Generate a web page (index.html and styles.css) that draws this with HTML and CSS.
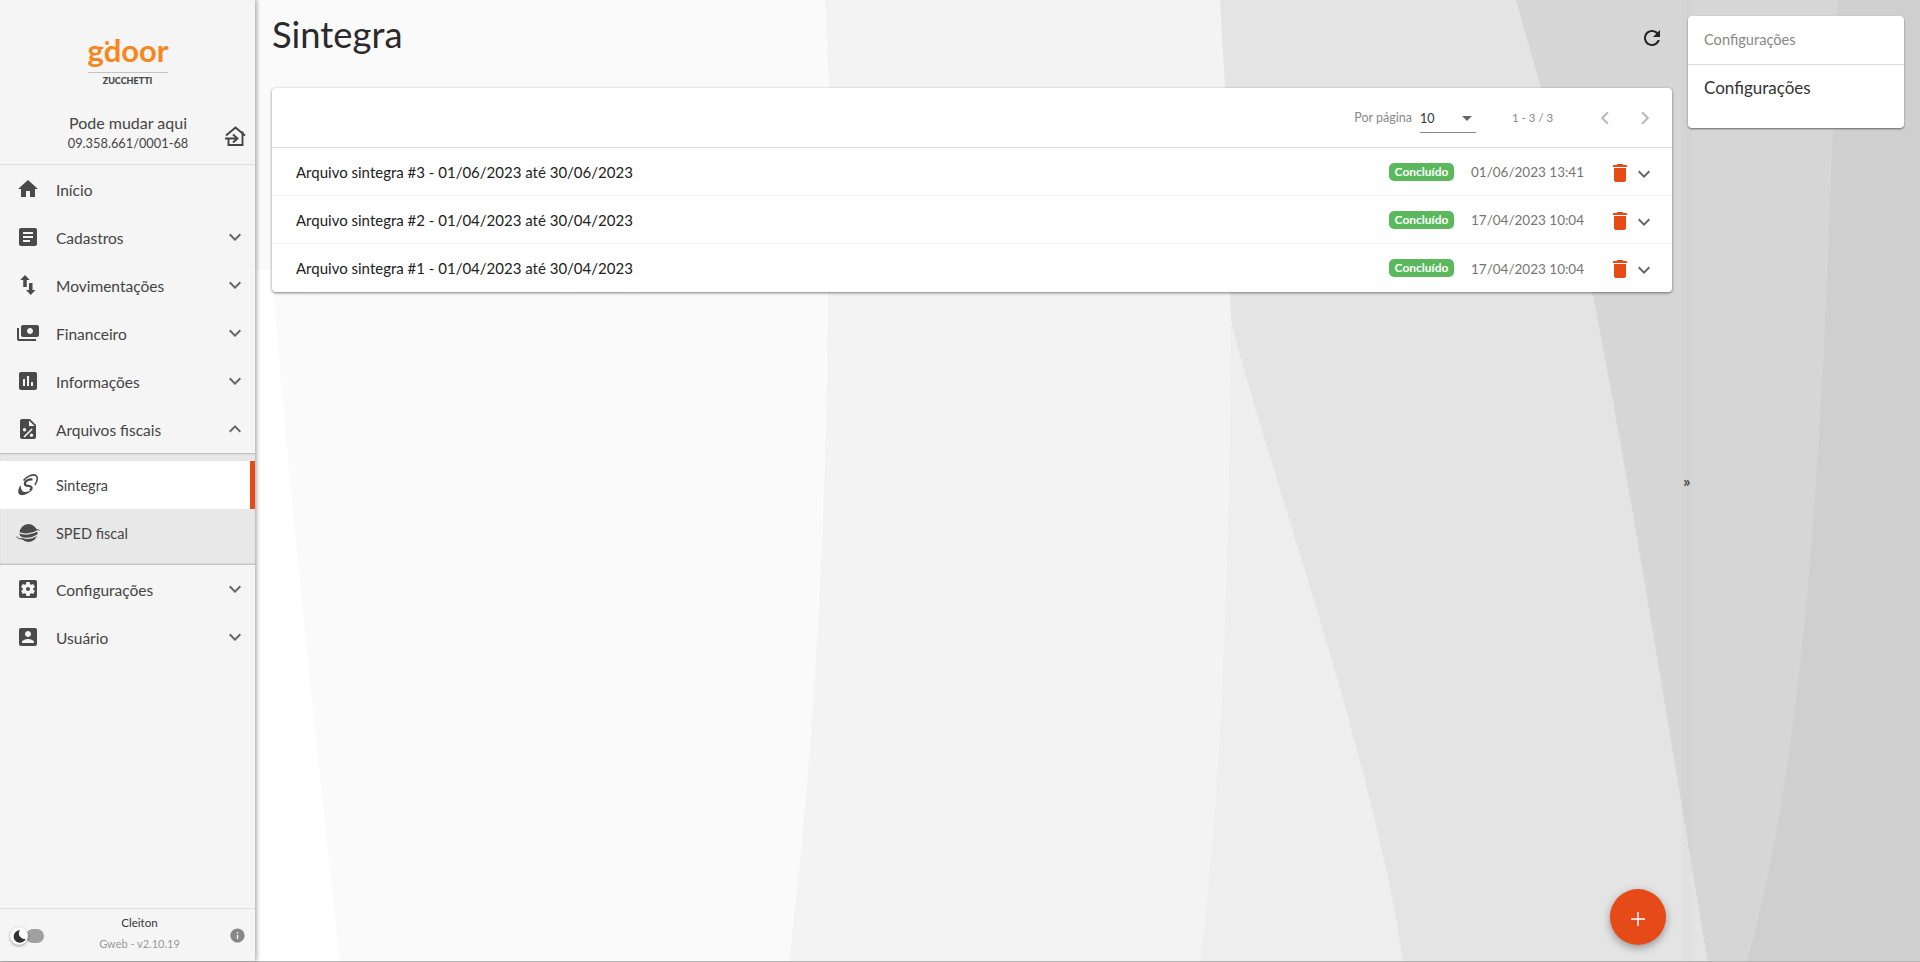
FILE: index.html
```html
<!DOCTYPE html>
<html lang="pt-BR">
<head>
  <meta charset="utf-8">
  <title>Sintegra</title>
  <link rel="stylesheet" href="styles.css">
</head>
<body>
  <svg class="sprite" width="0" height="0">
    <symbol id="i-home" viewBox="0 0 24 24"><path d="M10 20v-6h4v6h5v-8h3L12 3 2 12h3v8z"/></symbol>
    <symbol id="i-article" viewBox="0 0 24 24"><path d="M19 3H5c-1.1 0-2 .9-2 2v14c0 1.1.9 2 2 2h14c1.1 0 2-.9 2-2V5c0-1.1-.9-2-2-2zm-5 14H7v-2h7v2zm3-4H7v-2h10v2zm0-4H7V7h10v2z"/></symbol>
    <symbol id="i-swap" viewBox="0 0 24 24"><path d="M16.500 17.010V10h-3.500v7.010h-3L14.750 22l4.750-4.990h-3zM9 2L4.250 7h3v7h3.500V7h3L9 2z"/></symbol>
    <symbol id="i-money" viewBox="0 0 24 24"><path transform="matrix(-1 0 0 1 24 0)" d="M19 14V6c0-1.100-.9-2-2-2H3c-1.100 0-2 .9-2 2v8c0 1.100.9 2 2 2h14c1.100 0 2-.9 2-2zm-9-1c-1.660 0-3-1.340-3-3s1.340-3 3-3 3 1.340 3 3-1.340 3-3 3zm13-6v11c0 1.100-.9 2-2 2H4v-2h17V7h2z"/></symbol>
    <symbol id="i-chart" viewBox="0 0 24 24"><path d="M19 3H5c-1.100 0-2 .9-2 2v14c0 1.100.9 2 2 2h14c1.100 0 2-.9 2-2V5c0-1.100-.9-2-2-2zM9 17H7v-7h2v7zm4 0h-2V7h2v10zm4 0h-2v-4h2v4z"/></symbol>
    <symbol id="i-percent" viewBox="0 0 24 24"><path fill-rule="evenodd" d="M6 2h8l6 6v12c0 1.100-.9 2-2 2H6c-1.100 0-2-.9-2-2V4c0-1.100.9-2 2-2zm7 1.500V9h5.500zM15.500 11.500l-8 8 1.200 1 8-8zM8.500 11a1.700 1.700 0 1 0 0 3.400 1.700 1.700 0 0 0 0-3.400zm7 5.500a1.700 1.700 0 1 0 0 3.400 1.700 1.700 0 0 0 0-3.400z"/></symbol>
    <symbol id="i-orbit" viewBox="0 0 24 24">
      <path fill="none" stroke="#4a4a4a" stroke-width="1.600" d="M7.500 7.500C11 3 17 .8 19.800 2.400c2.400 1.500 1.700 5.600-.9 9.600"/>
      <path d="M4.600 12C2 16 1.300 20.200 3.700 21.600c3 1.700 9.300-.6 13-5.300-2.800 2.100-7.500 3.500-9.700 2.200-2-1.200-2.100-3.800-2.400-6.500z"/>
      <path fill="none" stroke="#4a4a4a" stroke-width="2.200" d="M16.500 6.500C12.500 6 8 8.500 9 11.500c.8 2.200 5.500.5 6.500 2.800.5 1.200-.6 2.300-1.800 3"/>
    </symbol>
    <symbol id="i-globe" viewBox="0 0 24 24">
      <circle cx="12.500" cy="12" r="9"/>
      <path fill="none" stroke="#e8e8e8" stroke-width="1.200" d="M3 11.500C8 14 16 13.500 22 9.500M3.500 15.500C9 18.500 16 17.500 21.500 14"/>
      <path fill="none" stroke="#4a4a4a" stroke-width="1" d="M1 15.500c-.4 1.800 3 2.400 6.500 2.500M18 8.500c2.500-.2 5-.1 5.500 1"/>
    </symbol>
    <symbol id="i-gear" viewBox="0 0 24 24"><path d="M12 10c-1.100 0-2 .9-2 2s.9 2 2 2 2-.9 2-2-.9-2-2-2zm7-7H5c-1.110 0-2 .9-2 2v14c0 1.100.89 2 2 2h14c1.110 0 2-.9 2-2V5c0-1.100-.89-2-2-2zm-1.750 9c0 .23-.02.46-.05.68l1.480 1.160c.13.11.17.3.08.45l-1.400 2.420c-.09.15-.27.21-.43.15l-1.740-.7c-.36.28-.76.51-1.180.69l-.26 1.850c-.03.17-.18.3-.35.3h-2.800c-.17 0-.32-.13-.35-.29l-.26-1.850c-.43-.18-.82-.41-1.180-.69l-1.740.7c-.16.06-.34 0-.43-.15l-1.400-2.420c-.09-.15-.05-.34.08-.45l1.480-1.160c-.03-.23-.05-.46-.05-.69 0-.23.02-.46.05-.68l-1.480-1.160c-.13-.11-.17-.3-.08-.45l1.400-2.420c.09-.15.27-.21.43-.15l1.740.7c.36-.28.76-.51 1.180-.69l.26-1.850c.03-.17.18-.3.35-.3h2.800c.17 0 .32.13.35.29l.26 1.850c.43.18.82.41 1.180.69l1.740-.7c.16-.06.34 0 .43.15l1.400 2.420c.09.15.05.34-.08.45l-1.480 1.160c.03.23.05.46.05.69z"/></symbol>
    <symbol id="i-user" viewBox="0 0 24 24"><path d="M3 5v14c0 1.100.89 2 2 2h14c1.100 0 2-.9 2-2V5c0-1.100-.9-2-2-2H5c-1.110 0-2 .9-2 2zm12 4c0 1.660-1.340 3-3 3s-3-1.340-3-3 1.340-3 3-3 3 1.340 3 3zm-9 8c0-2 4-3.100 6-3.100s6 1.100 6 3.100v1H6v-1z"/></symbol>
    <symbol id="i-down" viewBox="0 0 24 24"><path d="M16.590 8.590L12 13.170 7.410 8.590 6 10l6 6 6-6z"/></symbol>
    <symbol id="i-up" viewBox="0 0 24 24"><path d="M12 8l-6 6 1.410 1.410L12 10.830l4.590 4.580L18 14z"/></symbol>
    <symbol id="i-left" viewBox="0 0 24 24"><path d="M15.410 7.410L14 6l-6 6 6 6 1.410-1.410L10.830 12z"/></symbol>
    <symbol id="i-right" viewBox="0 0 24 24"><path d="M10 6L8.590 7.410 13.170 12l-4.580 4.590L10 18l6-6z"/></symbol>
    <symbol id="i-trash" viewBox="0 0 24 24"><path d="M6 19c0 1.100.9 2 2 2h8c1.100 0 2-.9 2-2V7H6v12zM19 4h-3.500l-1-1h-5l-1 1H5v2h14V4z"/></symbol>
  </svg>

  <svg class="waves" viewBox="0 0 1920 962" preserveAspectRatio="none">
    <path fill="#ffffff" d="M255 270H272L274 296C290 500 318 760 340 962H255Z"/>
    <path fill="#f3f3f3" d="M825 0L829 88L828 296C827 500 815 750 789 962H1920V0Z"/>
    <path fill="#eeeeee" d="M1231 296C1230 560 1222 790 1200 962H1500V296Z"/>
    <path fill="#e4e4e4" d="M1220 0L1225 88L1231 320C1262 450 1375 760 1403 962H1920V0Z"/>
    <path fill="#d6d6d6" d="M1516 0L1541 88L1593 296C1630 480 1680 800 1708 962H1920V0Z"/>
    <path fill="#cfcfcf" d="M1838 0L1827 280C1815 560 1795 790 1747 962H1920V0Z"/>
  </svg>

  <div class="app">
    <nav class="sidebar">
      <div class="brand">
        <div class="logo">gdoor<span class="logo-dot"></span></div>
        <div class="logo-sub">ZUCCHETTI</div>
      </div>

      <div class="company">
        <div class="company-info">
          <div class="company-name">Pode mudar aqui</div>
          <div class="company-doc">09.358.661/0001-68</div>
        </div>
        <svg class="company-switch" viewBox="0 0 24 24">
          <path d="M3 11.500L12.500 3.500L22 11.500M5.500 14V21H19.500V7.500M2 14.500H14M10 10.500L14.500 14.500L10 18.500M6 21H20" fill="none" stroke="#444" stroke-width="1.900"/>
        </svg>
      </div>

      <ul class="menu">
        <li class="menu-item"><svg class="icon"><use href="#i-home"/></svg><span>Início</span></li>
        <li class="menu-item"><svg class="icon"><use href="#i-article"/></svg><span>Cadastros</span><svg class="chev"><use href="#i-down"/></svg></li>
        <li class="menu-item"><svg class="icon"><use href="#i-swap"/></svg><span>Movimentações</span><svg class="chev"><use href="#i-down"/></svg></li>
        <li class="menu-item"><svg class="icon"><use href="#i-money"/></svg><span>Financeiro</span><svg class="chev"><use href="#i-down"/></svg></li>
        <li class="menu-item"><svg class="icon"><use href="#i-chart"/></svg><span>Informações</span><svg class="chev"><use href="#i-down"/></svg></li>
        <li class="menu-item"><svg class="icon"><use href="#i-percent"/></svg><span>Arquivos fiscais</span><svg class="chev"><use href="#i-up"/></svg></li>
        <li>
          <ul class="submenu">
            <li class="menu-item sub-item active"><svg class="icon"><use href="#i-orbit"/></svg><span>Sintegra</span></li>
            <li class="menu-item sub-item"><svg class="icon"><use href="#i-globe"/></svg><span>SPED fiscal</span></li>
          </ul>
        </li>
        <li class="menu-item"><svg class="icon"><use href="#i-gear"/></svg><span>Configurações</span><svg class="chev"><use href="#i-down"/></svg></li>
        <li class="menu-item"><svg class="icon"><use href="#i-user"/></svg><span>Usuário</span><svg class="chev"><use href="#i-down"/></svg></li>
      </ul>

      <div class="side-foot">
        <div class="toggle">
          <div class="toggle-knob">
            <svg viewBox="0 0 24 24" width="15" height="15"><path fill="#333" d="M13 2a10 10 0 1 0 9 13.500A8.500 8.500 0 0 1 13 2z"/></svg>
          </div>
        </div>
        <div class="foot-info">
          <div class="foot-user">Cleiton</div>
          <div class="foot-version">Gweb - v2.10.19</div>
        </div>
        <svg class="foot-help" viewBox="0 0 24 24"><path d="M12 2C6.480 2 2 6.480 2 12s4.480 10 10 10 10-4.480 10-10S17.520 2 12 2zm1 15h-2v-6h2v6zm0-8h-2V7h2v2z"/></svg>
      </div>
    </nav>

    <main class="content">
      <header class="page-head">
        <h1>Sintegra</h1>
        <svg class="refresh" viewBox="0 0 24 24"><path d="M17.650 6.350C16.200 4.900 14.210 4 12 4c-4.420 0-7.990 3.580-7.990 8s3.570 8 7.990 8c3.730 0 6.840-2.550 7.730-6h-2.080c-.82 2.330-3.040 4-5.650 4-3.310 0-6-2.690-6-6s2.690-6 6-6c1.660 0 3.140.69 4.220 1.780L13 11h7V4l-2.350 2.350z"/></svg>
      </header>

      <section class="card">
        <div class="pager">
          <span class="pager-label">Por página</span>
          <div class="pager-select"><span>10</span><i class="caret"></i></div>
          <span class="pager-range">1 - 3 / 3</span>
          <svg class="pager-nav"><use href="#i-left"/></svg>
          <svg class="pager-nav"><use href="#i-right"/></svg>
        </div>

        <div class="row">
          <span class="row-title">Arquivo sintegra #3 - 01/06/2023 até 30/06/2023</span>
          <span class="chip">Concluído</span>
          <span class="row-date">01/06/2023 13:41</span>
          <svg class="row-trash"><use href="#i-trash"/></svg>
          <svg class="row-chev"><use href="#i-down"/></svg>
        </div>
        <div class="row">
          <span class="row-title">Arquivo sintegra #2 - 01/04/2023 até 30/04/2023</span>
          <span class="chip">Concluído</span>
          <span class="row-date">17/04/2023 10:04</span>
          <svg class="row-trash"><use href="#i-trash"/></svg>
          <svg class="row-chev"><use href="#i-down"/></svg>
        </div>
        <div class="row">
          <span class="row-title">Arquivo sintegra #1 - 01/04/2023 até 30/04/2023</span>
          <span class="chip">Concluído</span>
          <span class="row-date">17/04/2023 10:04</span>
          <svg class="row-trash"><use href="#i-trash"/></svg>
          <svg class="row-chev"><use href="#i-down"/></svg>
        </div>
      </section>
    </main>

    <aside class="side-panel">
      <div class="handle"><span>»</span></div>
      <div class="panel">
        <div class="panel-title">Configurações</div>
        <div class="panel-link">Configurações</div>
      </div>
    </aside>

    <button class="fab" type="button" aria-label="Adicionar">
      <svg viewBox="0 0 14 14" width="14" height="14"><path d="M7 0V14M0 7H14" stroke="#fff" stroke-width="1.500"/></svg>
    </button>
  </div>
</body>
</html>
```

FILE: styles.css
```css
html, body {
  margin: 0;
  height: 100%;
  overflow: hidden;
}

body {
  position: relative;
  background: #fafafa;
  color: #212121;
  font-family: "Lato", "Noto Sans", sans-serif;
}

ul {
  list-style: none;
  margin: 0;
  padding: 0;
}

.sprite {
  position: absolute;
}

.waves {
  position: absolute;
  top: 0;
  left: 0;
  width: 1920px;
  height: 962px;
}

.app {
  position: relative;
  display: flex;
  height: 961px;
  border-bottom: 1px solid #b4b4b4;
}

/* sidebar */

.sidebar {
  display: flex;
  flex-direction: column;
  flex: none;
  width: 255px;
  background: #f5f5f5;
  box-shadow: 2px 0 4px rgba(0, 0, 0, .3);
  color: #444;
}

.brand {
  height: 108px;
  padding-top: 28px;
  box-sizing: border-box;
}

.logo {
  position: relative;
  width: 80px;
  margin: 0 auto;
  color: #f7861e;
  font-size: 31px;
  font-weight: 700;
  line-height: 44px;
  text-align: center;
}

.logo-dot {
  position: absolute;
  top: 13px;
  left: 17px;
  width: 4px;
  height: 4px;
  border-radius: 50%;
  background: #f7861e;
}

.logo-sub {
  width: 80px;
  margin: 0 auto;
  border-top: 1px solid #c4c4c4;
  color: #444;
  font-size: 9px;
  font-weight: 900;
  line-height: 16px;
  text-align: center;
}

.company {
  display: flex;
  align-items: center;
  height: 57px;
  box-sizing: border-box;
  border-bottom: 1px solid #ddd;
}

.company-info {
  flex: none;
  width: 256px;
  margin-right: -33px;
  padding-bottom: 9px;
  text-align: center;
}

.company-name {
  font-size: 16px;
  line-height: 22px;
}

.company-doc {
  font-size: 12.800px;
  line-height: 18px;
}

.company-switch {
  flex: none;
  width: 24px;
  height: 24px;
}

.menu {
  flex: 1;
}

.menu-item {
  display: flex;
  align-items: center;
  height: 48px;
  padding-left: 16px;
  font-size: 15.500px;
}

.menu-item span {
  flex: 1;
  padding-top: 1px;
}

.icon {
  flex: none;
  width: 24px;
  height: 24px;
  margin-right: 16px;
  fill: #4a4a4a;
}

.chev {
  flex: none;
  width: 24px;
  height: 24px;
  margin-right: 8px;
  fill: #666;
}

.submenu {
  padding: 8px 0;
  background: #e8e8e8;
  box-shadow: inset 0 2px 2px -1px rgba(0, 0, 0, .2), inset 0 -2px 2px -1px rgba(0, 0, 0, .2);
}

.sub-item {
  box-sizing: border-box;
  font-size: 14.500px;
}

.sub-item span {
  padding-top: 0;
}

.active {
  background: #fff;
  border-right: 5px solid #e64a19;
}

.side-foot {
  display: flex;
  align-items: center;
  height: 53px;
  box-sizing: border-box;
  border-top: 1px solid #ddd;
}

.toggle {
  position: relative;
  flex: none;
  width: 18px;
  height: 14px;
  margin: 2px 0 0 26px;
  border-radius: 7px;
  background: #a0a0a0;
}

.toggle-knob {
  position: absolute;
  top: -2px;
  left: -16px;
  display: flex;
  align-items: center;
  justify-content: center;
  width: 18px;
  height: 18px;
  border-radius: 50%;
  background: #fff;
  box-shadow: 0 1px 3px rgba(0, 0, 0, .4);
}

.foot-info {
  flex: 1;
  padding: 0 0 4px 6px;
  text-align: center;
}

.foot-user {
  color: #333;
  font-size: 11.500px;
  line-height: 21px;
}

.foot-version {
  color: #999;
  font-size: 11px;
  line-height: 21px;
}

.foot-help {
  flex: none;
  width: 17px;
  height: 17px;
  margin-right: 9px;
  fill: #888;
}

/* main column */

.content {
  flex: 1;
  margin: 0 10px 0 17px;
  min-width: 0;
}

.page-head {
  display: flex;
  align-items: center;
  justify-content: space-between;
  height: 88px;
  padding-bottom: 20px;
  box-sizing: border-box;
}

.page-head h1 {
  margin: 0;
  color: #2a2a2a;
  font-size: 36.400px;
  font-weight: 400;
  line-height: 68px;
}

.refresh {
  width: 24px;
  height: 24px;
  margin: 8px 8px 0 0;
  fill: #212121;
}

.card {
  background: #fff;
  border-radius: 4px;
  box-shadow: 0 1px 3px rgba(0, 0, 0, .5);
}

.pager {
  display: flex;
  align-items: center;
  justify-content: flex-end;
  height: 59px;
  padding-right: 14px;
  border-bottom: 1px solid #ddd;
  color: #888;
  font-size: 12.500px;
}

.pager-label {
  margin-right: 8px;
}

.pager-select {
  display: flex;
  align-items: center;
  justify-content: space-between;
  width: 56px;
  height: 28px;
  margin-top: 2px;
  box-sizing: border-box;
  border-bottom: 1px solid #888;
  color: #333;
}

.caret {
  width: 0;
  height: 0;
  margin-right: 4px;
  border-left: 5px solid transparent;
  border-right: 5px solid transparent;
  border-top: 5px solid #666;
}

.pager-range {
  width: 40px;
  margin: 0 26px 0 36px;
  font-size: 11.500px;
  white-space: nowrap;
}

.pager-nav {
  width: 26px;
  height: 26px;
  margin-left: 14px;
  fill: #bbb;
}

.row {
  display: flex;
  align-items: center;
  height: 48px;
  box-sizing: border-box;
  padding: 0 16px 0 24px;
  border-bottom: 1px solid #f4f4f4;
  font-size: 15px;
}

.row:last-child {
  border-bottom: 0;
}

.row-title {
  flex: 1;
}

.chip {
  width: 65px;
  height: 18px;
  border-radius: 5px;
  background: #5cb85c;
  color: #fff;
  font-size: 12px;
  font-weight: 700;
  line-height: 18px;
  text-align: center;
}

.row-date {
  margin: 0 24px 0 17px;
  padding-top: 1px;
  color: #757575;
  font-size: 13.500px;
  white-space: nowrap;
}

.row-trash {
  width: 24px;
  height: 24px;
  margin-top: 2px;
  fill: #e64a19;
}

.row-chev {
  width: 24px;
  height: 24px;
  margin-top: 4px;
  fill: #666;
}

/* right column */

.side-panel {
  position: relative;
  flex: none;
  width: 238px;
  padding: 16px 16px 0 6px;
  box-sizing: border-box;
}

.handle {
  position: absolute;
  top: 0;
  left: 0;
  bottom: 0;
  display: flex;
  align-items: center;
  justify-content: center;
  width: 10px;
  background: rgba(0, 0, 0, .012);
  color: #444;
  font-size: 16px;
  font-weight: 700;
}

.panel {
  position: relative;
  height: 112px;
  background: #fff;
  border-radius: 4px;
  box-shadow: 0 1px 2px rgba(0, 0, 0, .5);
}

.panel-title {
  height: 48px;
  padding-left: 16px;
  border-bottom: 1px solid #ddd;
  color: #888;
  font-size: 14.600px;
  line-height: 48px;
}

.panel-link {
  padding-left: 16px;
  color: #333;
  font-size: 17px;
  font-weight: 400;
  line-height: 46px;
}

.fab {
  position: absolute;
  left: 1610px;
  top: 889px;
  display: flex;
  align-items: center;
  justify-content: center;
  width: 56px;
  height: 56px;
  padding: 3px 0 0;
  border: 0;
  border-radius: 50%;
  background: #e64a19;
  box-shadow: 0 3px 8px rgba(0, 0, 0, .35);
}
```
